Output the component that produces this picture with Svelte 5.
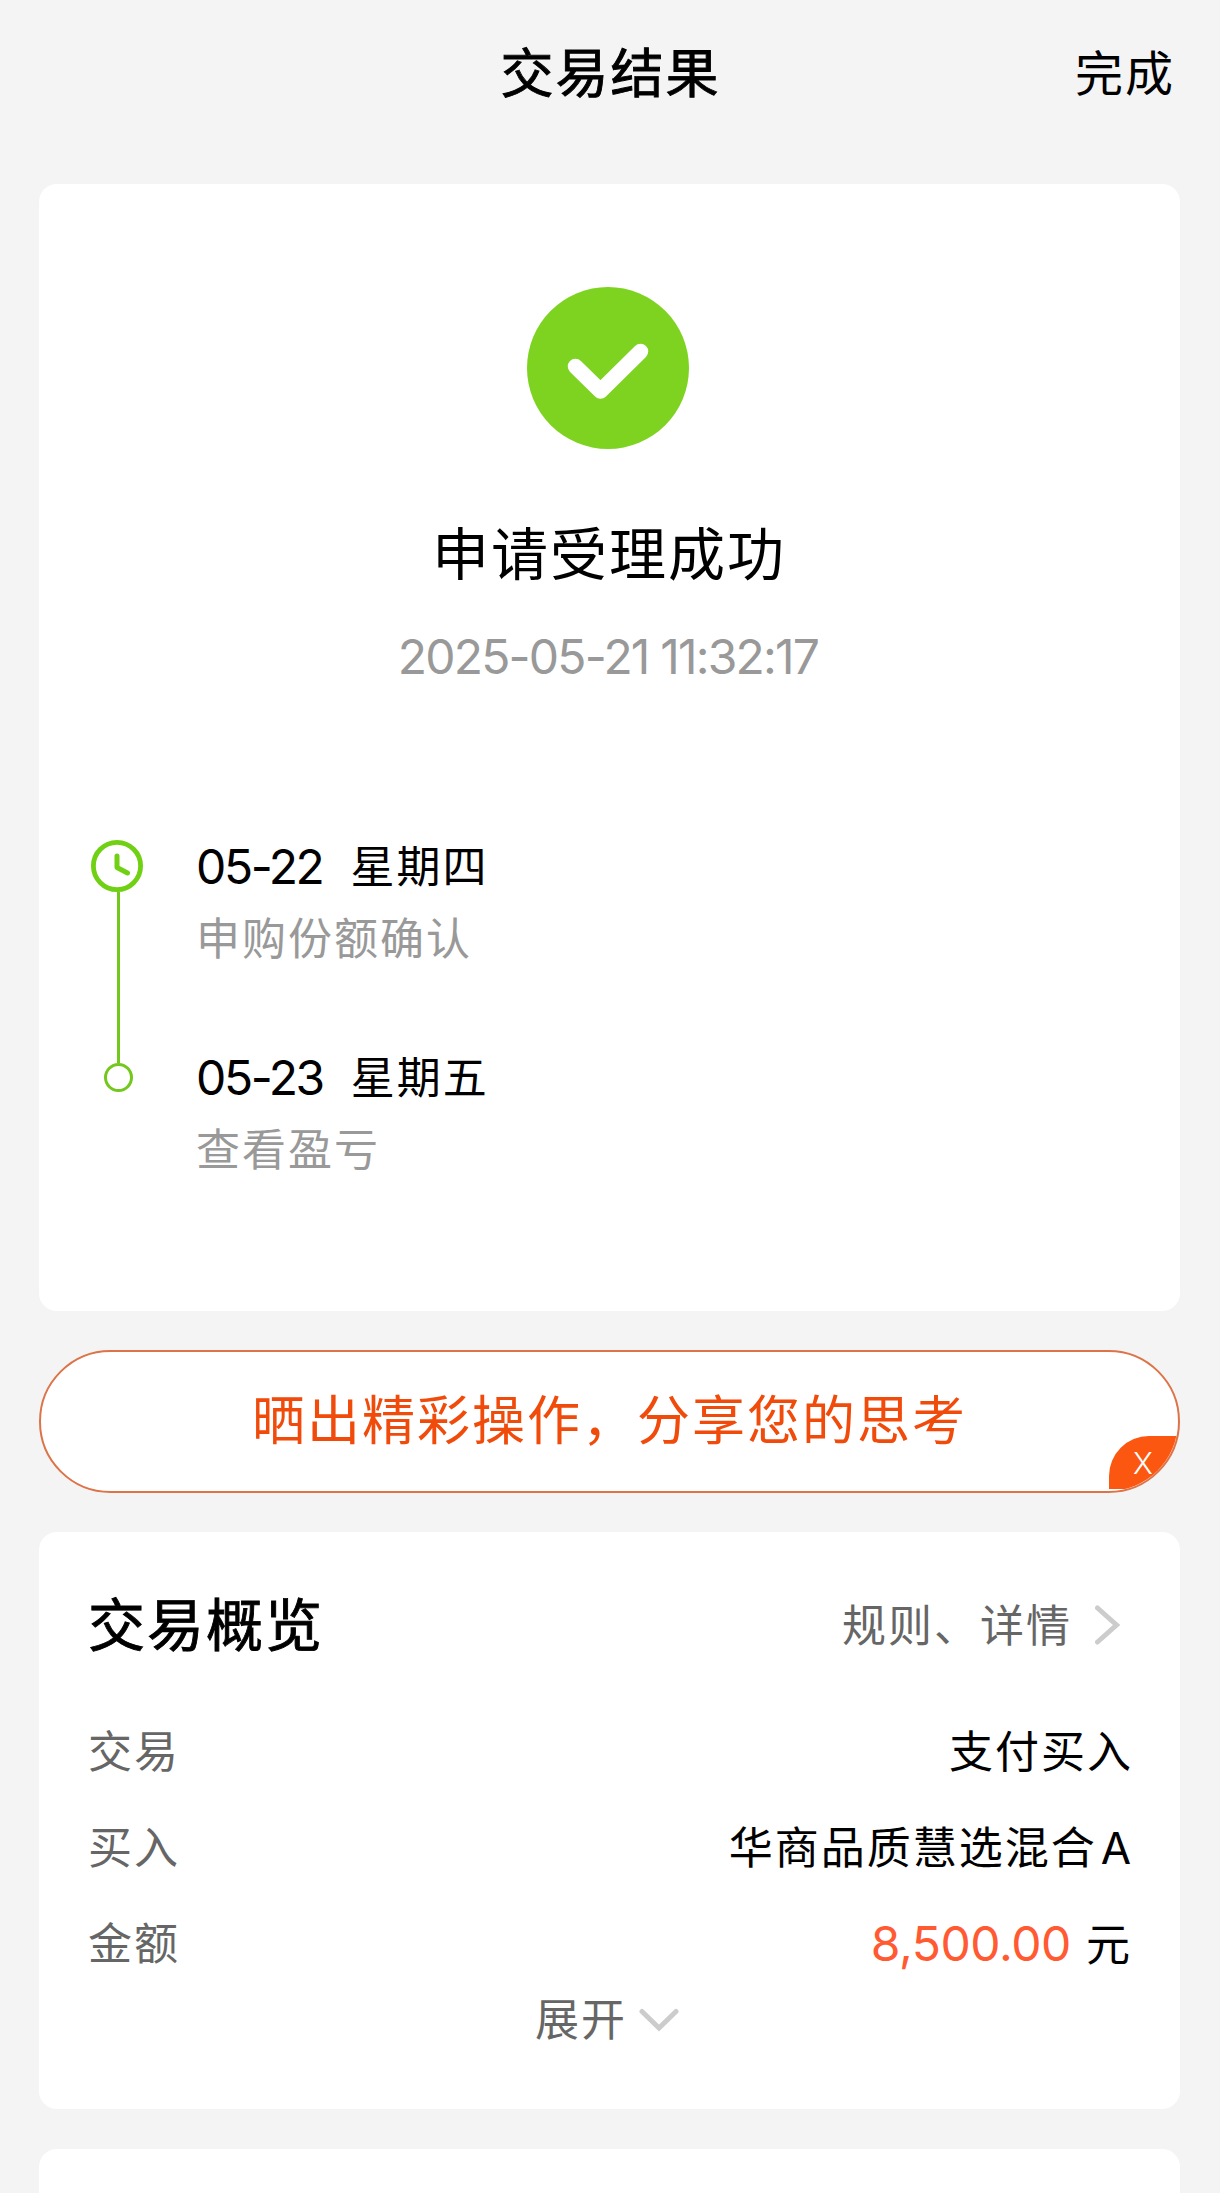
<script>
  const steps = [
    { date: "05-22", weekday: "星期四", label: "申购份额确认" },
    { date: "05-23", weekday: "星期五", label: "查看盈亏" },
  ];

  let showShare = $state(true);
</script>

<main>
  <header>
    <h1>交易结果</h1>
    <button type="button" class="done">完成</button>
  </header>

  <section class="card result">
    <svg class="success" viewBox="0 0 162 162">
      <circle cx="81" cy="81" r="81" fill="#7ed321" />
      <path
        d="M48.5 79.5L73.5 104L113.5 64.5"
        fill="none"
        stroke="#fff"
        stroke-width="15.5"
        stroke-linecap="round"
        stroke-linejoin="round"
      />
    </svg>
    <h2>申请受理成功</h2>
    <p class="time">2025-05-21 11:32:17</p>

    <div class="timeline">
      <div class="rail">
        <svg class="clock" viewBox="0 0 52 52" fill="none" stroke="#70d013">
          <circle cx="26" cy="26" r="23.6" stroke-width="4.8" />
          <path
            d="M26 16V27.5L36.5 33"
            stroke-width="5"
            stroke-linecap="round"
            stroke-linejoin="round"
          />
        </svg>
        <span class="line"></span>
        <span class="dot"></span>
      </div>
      <ul>
        {#each steps as step}
          <li>
            <div class="day">
              <span class="date">{step.date}</span>
              <span class="weekday">{step.weekday}</span>
            </div>
            <div class="label">{step.label}</div>
          </li>
        {/each}
      </ul>
    </div>
  </section>

  {#if showShare}
    <div class="share">
      <span>晒出精彩操作，分享您的思考</span>
      <button type="button" class="close" onclick={() => (showShare = false)}>X</button>
    </div>
  {/if}

  <section class="card overview">
    <div class="head">
      <h3>交易概览</h3>
      <a href="#rules">
        <span>规则、详情</span>
        <svg width="25" height="44" viewBox="0 0 25 44">
          <path d="M2.5 5L21.5 22L2.5 39" />
        </svg>
      </a>
    </div>
    <dl>
      <div class="row">
        <dt>交易</dt>
        <dd>支付买入</dd>
      </div>
      <div class="row">
        <dt>买入</dt>
        <dd>华商品质慧选混合<span class="share-class">A</span></dd>
      </div>
      <div class="row">
        <dt>金额</dt>
        <dd><span class="amount">8,500.00</span>元</dd>
      </div>
    </dl>
    <button type="button" class="expand">
      展开
      <svg width="40" height="25" viewBox="0 0 40 25">
        <path d="M3 3.5L20 20L37 3.5" />
      </svg>
    </button>
  </section>

  <section class="card next"></section>
</main>

<style>
  :global(body) {
    margin: 0;
    background: #f4f4f4;
  }

  main {
    box-sizing: border-box;
    height: 2193px;
    padding: 0 40px 0 39px;
    overflow: hidden;
    background: #f4f4f4;
    color: #000;
    font-family: Inter, "Noto Sans CJK SC", sans-serif;
    font-size: 44px;
    line-height: 1.2;
    letter-spacing: 2px;
  }

  h1,
  h2,
  h3,
  p,
  ul,
  dl,
  dd {
    margin: 0;
    padding: 0;
    font-weight: 400;
  }

  button {
    padding: 0;
    border: 0;
    background: none;
    font: inherit;
    letter-spacing: inherit;
    cursor: pointer;
  }

  header {
    display: grid;
    grid-template-columns: 1fr auto 1fr;
    align-items: center;
    height: 146px;
    margin-bottom: 38px;
  }

  h1 {
    grid-column: 2;
    padding: 4px 0 0 2px;
    font-size: 53px;
    -webkit-text-stroke: 0.9px #000;
  }

  .done {
    justify-self: end;
    margin: 2px 5px 0 0;
    font-size: 48px;
    color: #000;
  }

  .card {
    box-sizing: border-box;
    border-radius: 18px;
    background: #fff;
  }

  .result {
    display: flex;
    flex-direction: column;
    align-items: center;
    height: 1127px;
    padding-top: 103px;
  }

  .success {
    width: 162px;
    height: 162px;
    margin-right: 3px;
  }

  h2 {
    margin: 76px 1px 0 0;
    font-size: 57px;
    line-height: 60px;
  }

  .time {
    margin: 42px 3px 0 0;
    color: #999;
    font-size: 48px;
    line-height: 60px;
    letter-spacing: -1.8px;
  }

  .timeline {
    display: flex;
    align-self: stretch;
    gap: 53px;
    margin-top: 143px;
    padding-left: 52px;
  }

  .rail {
    display: flex;
    flex-direction: column;
    align-items: center;
    width: 52px;
    padding-top: 10px;
  }

  .clock {
    width: 52px;
    height: 52px;
  }

  .line {
    width: 3px;
    height: 171px;
    margin-left: 3px;
    background: #74c71c;
  }

  .dot {
    box-sizing: border-box;
    width: 29px;
    height: 29px;
    margin-left: 3px;
    border: 3px solid #74c71c;
    border-radius: 50%;
  }

  ul {
    padding-top: 1px;
    list-style: none;
  }

  li {
    height: 211px;
    line-height: 72px;
  }

  .day {
    display: flex;
    gap: 28px;
  }

  .date {
    font-size: 48px;
    letter-spacing: -2.4px;
  }

  .label {
    color: #999;
  }

  .share {
    position: relative;
    display: flex;
    align-items: center;
    justify-content: center;
    box-sizing: border-box;
    height: 143px;
    margin: 39px 0;
    border: 2px solid #dd7449;
    border-radius: 72px;
    overflow: hidden;
    background: #fff;
    color: #f04b0a;
    font-size: 53px;
  }

  .close {
    position: absolute;
    right: 0;
    bottom: 2px;
    width: 69px;
    height: 53px;
    padding-left: 1px;
    border-top-left-radius: 40px;
    background: #fc5710;
    color: #fff;
    font-size: 30px;
    font-weight: 300;
  }

  .overview {
    height: 577px;
    padding: 57px 49px 0;
  }

  .head,
  .row {
    display: flex;
    align-items: center;
    justify-content: space-between;
  }

  .head {
    height: 72px;
    margin-bottom: 43px;
  }

  h3 {
    padding-top: 3px;
    font-size: 57px;
    -webkit-text-stroke: 0.9px #000;
  }

  a {
    display: flex;
    align-items: center;
    gap: 23px;
    margin-right: 11px;
    color: #666;
    text-decoration: none;
  }

  a span {
    padding-top: 3px;
  }

  a path,
  .expand path {
    fill: none;
    stroke: #ccc;
    stroke-width: 5;
    stroke-linecap: round;
  }

  .row {
    height: 96px;
  }

  dt {
    color: #666;
  }

  dd {
    margin-right: -2px;
  }

  .share-class {
    margin-left: 4px;
  }

  .amount {
    margin-right: 15px;
    color: #ff5a32;
    font-size: 48px;
    letter-spacing: -0.4px;
  }

  .row:last-child dd {
    margin-right: -1px;
  }

  .expand {
    display: flex;
    align-items: center;
    gap: 12px;
    height: 60px;
    margin: -2px auto 0;
    padding-right: 5px;
    color: #666;
  }

  .next {
    height: 120px;
    margin-top: 40px;
  }
</style>
